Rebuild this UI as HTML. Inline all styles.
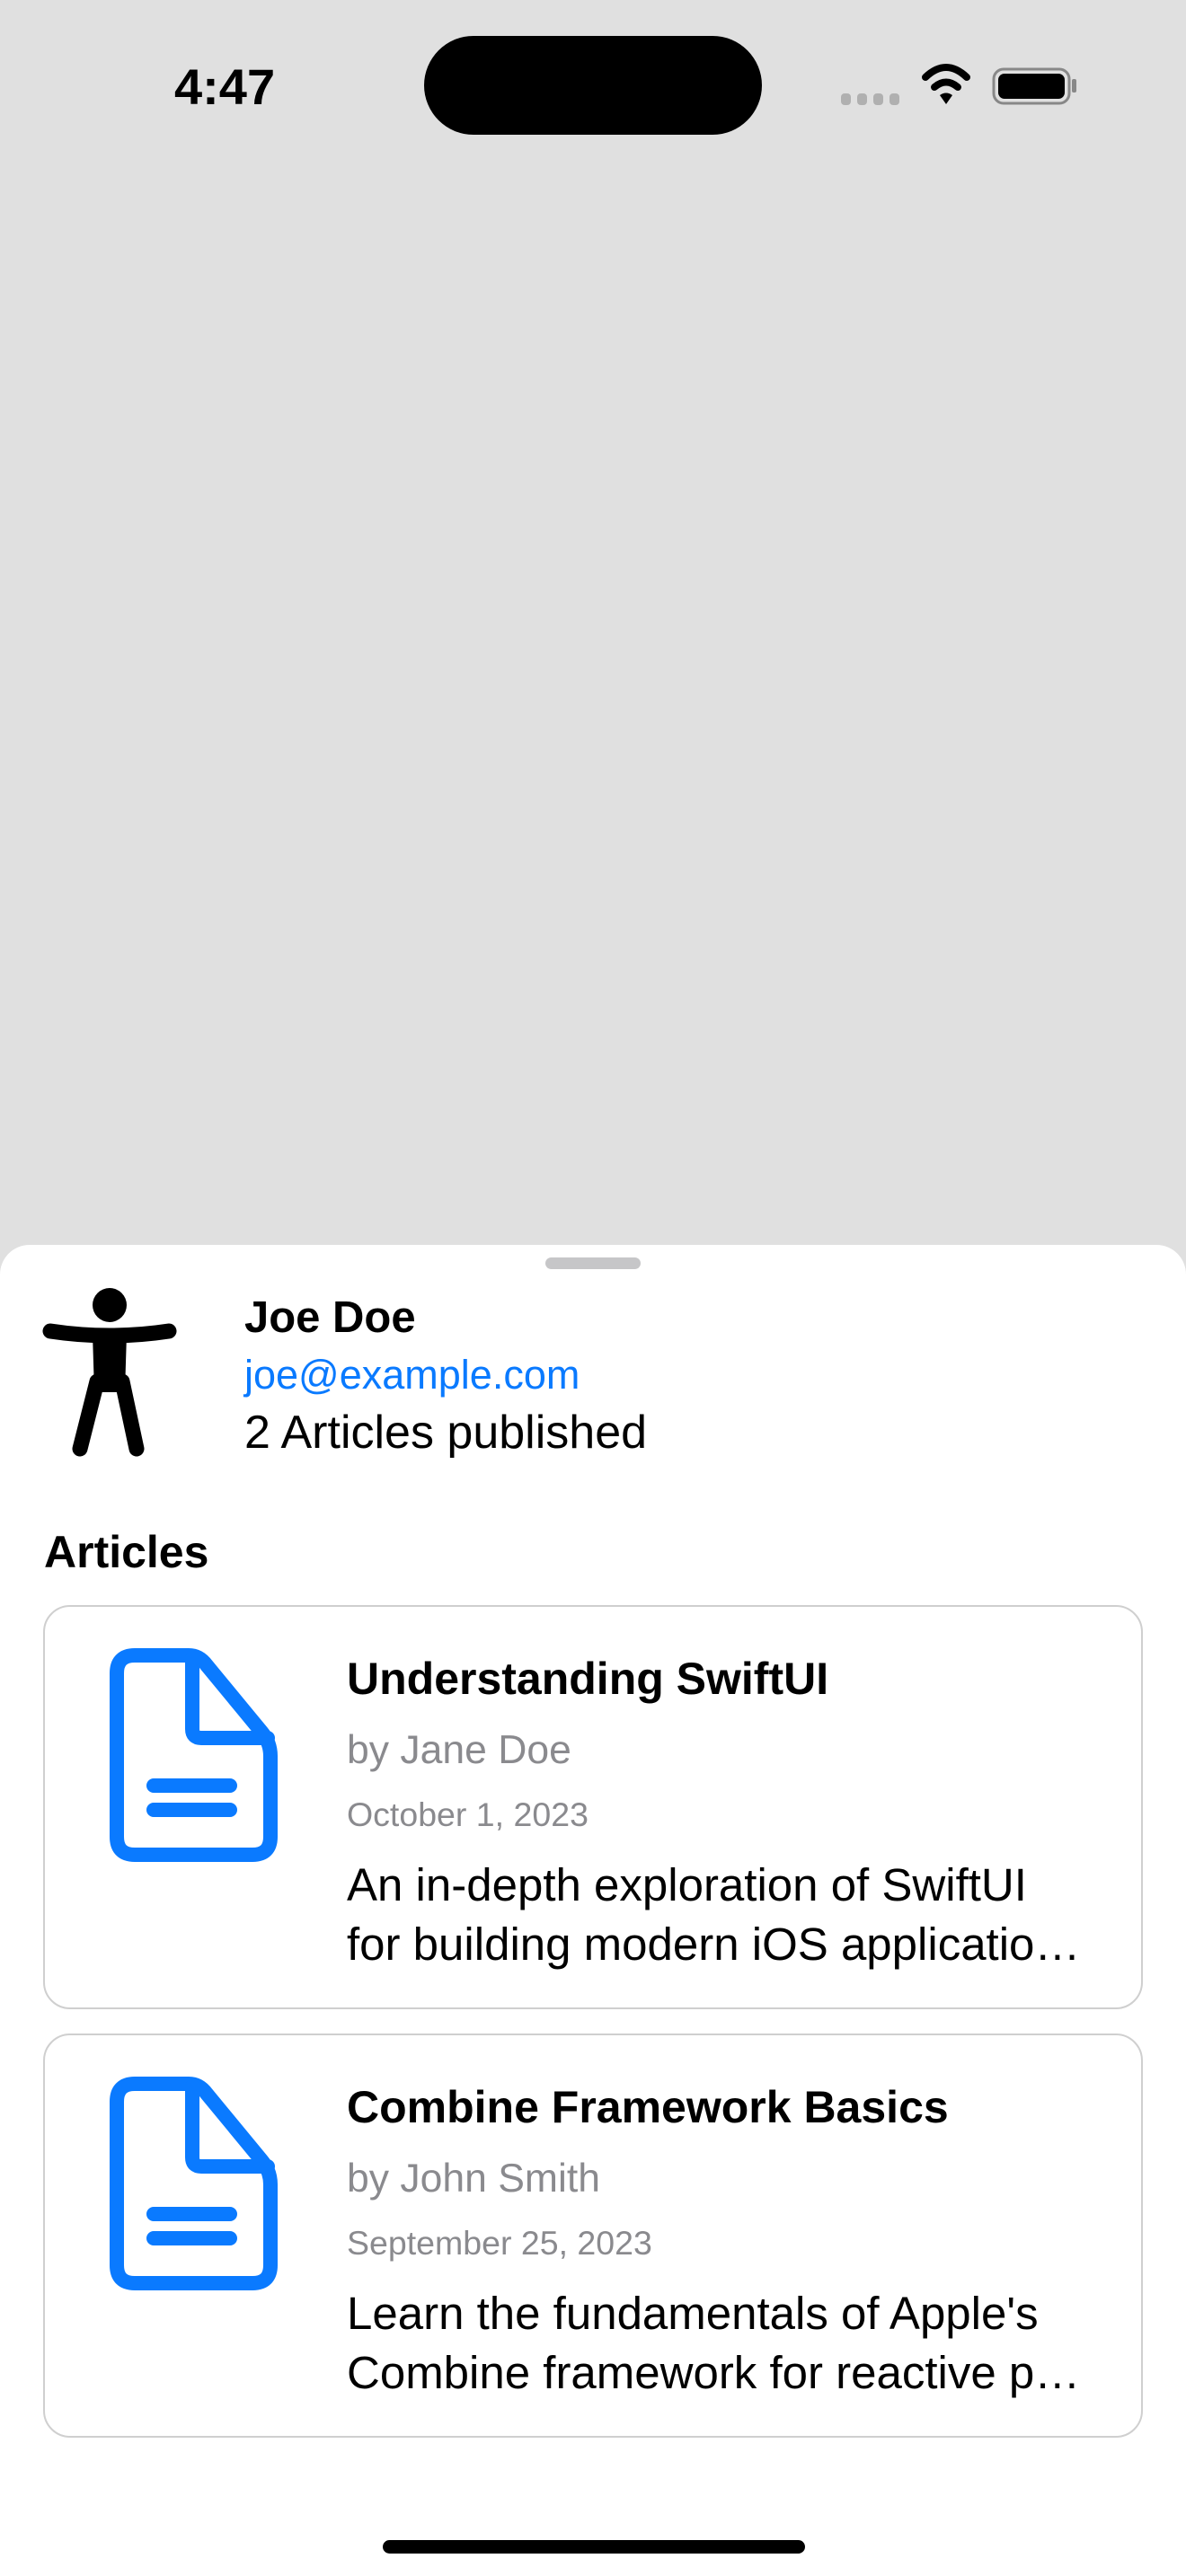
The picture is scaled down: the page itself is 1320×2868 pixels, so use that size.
<!DOCTYPE html>
<html><head><meta charset="utf-8"><style>
html,body{margin:0;padding:0}
body{width:1320px;height:2868px;background:#e0e0e0;position:relative;overflow:hidden;font-family:"Liberation Sans",sans-serif}
.t{position:absolute;white-space:nowrap;line-height:1}
.sheet{position:absolute;left:0;top:1386px;width:1320px;height:1482px;background:#fff;border-radius:33px 33px 0 0}
.card{position:absolute;left:48px;width:1224px;height:450px;border:2px solid #cfcfcf;border-radius:30px;box-sizing:border-box;background:#fff}
.ttl{font-size:50px;font-weight:bold;color:#000}
.au{font-size:44.5px;color:#8a8a8e}
.dt{font-size:37.5px;color:#8a8a8e}
.ds{font-size:51px;line-height:1.2;color:#000;width:830px;overflow:hidden;text-overflow:ellipsis}
</style></head><body>
<div class="t" style="left:194px;top:69px;font-size:56px;font-weight:bold">4:47</div>
<div style="position:absolute;left:472px;top:40px;width:376px;height:110px;background:#000;border-radius:55px"></div>
<svg style="position:absolute;left:0;top:0" width="1320" height="180">
<g fill="#b0b0b0"><rect x="936" y="104" width="11" height="13" rx="4"/><rect x="954" y="104" width="11" height="13" rx="4"/><rect x="972" y="104" width="11" height="13" rx="4"/><rect x="990" y="104" width="11" height="13" rx="4"/></g>
<g fill="none" stroke="#000" stroke-width="8" stroke-linecap="round">
<path d="M1030 86 Q1053 64 1076 86"/><path d="M1040 97 Q1053 86 1066 97"/></g>
<path d="M1046 106 L1053 116 L1060 106 Q1053 101 1046 106Z" fill="#000"/>
<rect x="1106" y="77" width="84" height="38" rx="11" fill="none" stroke="#888" stroke-width="3"/>
<rect x="1111" y="82" width="74" height="28" rx="7" fill="#000"/>
<rect x="1193" y="88" width="5" height="15" rx="2" fill="#888"/>
</svg>
<div class="sheet"></div>
<div style="position:absolute;left:607px;top:1400px;width:106px;height:13px;border-radius:7px;background:#c6c6c8"></div>
<svg style="position:absolute;left:0;top:1400px" width="240" height="240" viewBox="0 1400 240 240">
<circle cx="122" cy="1453" r="19" fill="#000"/>
<path d="M56 1482 Q122 1492 188 1482" stroke="#000" stroke-width="17" stroke-linecap="round" fill="none"/>
<path d="M103 1485 L141 1485 L139 1550 L105 1550Z" fill="#000"/>
<path d="M108 1538 L89 1613 M136 1538 L152 1613" stroke="#000" stroke-width="17" stroke-linecap="round" fill="none"/>
</svg>
<div class="t" style="left:272px;top:1443px;font-size:49px;font-weight:bold">Joe Doe</div>
<div class="t" style="left:272px;top:1508px;font-size:45px;color:#0a7aff">joe@example.com</div>
<div class="t" style="left:272px;top:1569px;font-size:52px">2 Articles published</div>
<div class="t" style="left:49px;top:1703px;font-size:50px;font-weight:bold">Articles</div>

<div class="card" style="top:1787px"></div>
<div class="card" style="top:2264px"></div>

<svg style="position:absolute;left:0;top:0" width="400" height="2868">
<g id="d" fill="none" stroke="#0a7aff" stroke-width="16" stroke-linejoin="round" stroke-linecap="round">
<path d="M150 1843 L210 1843 Q222 1843 230 1854 L291 1928 Q301 1940 301 1955 L301 2045 Q301 2065 281 2065 L150 2065 Q130 2065 130 2045 L130 1863 Q130 1843 150 1843Z"/>
<path d="M214 1846 L214 1925 Q214 1935 224 1935 L298 1935"/>
<path d="M171 1988 L256 1988 M171 2015 L256 2015"/>
</g>
<use href="#d" y="477"/>
</svg>

<div class="t ttl" style="left:386px;top:1844px">Understanding SwiftUI</div>
<div class="t au" style="left:386px;top:1927px">by Jane Doe</div>
<div class="t dt" style="left:386px;top:2002px">October 1, 2023</div>
<div class="t ds" style="left:386px;top:2068px">An in-depth exploration of SwiftUI</div>
<div class="t ds" style="left:386px;top:2134px">for building modern iOS applicatio…</div>

<div class="t ttl" style="left:386px;top:2321px">Combine Framework Basics</div>
<div class="t au" style="left:386px;top:2404px">by John Smith</div>
<div class="t dt" style="left:386px;top:2479px">September 25, 2023</div>
<div class="t ds" style="left:386px;top:2545px">Learn the fundamentals of Apple's</div>
<div class="t ds" style="left:386px;top:2611px">Combine framework for reactive programming</div>

<div style="position:absolute;left:426px;top:2828px;width:470px;height:15px;border-radius:8px;background:#000"></div>
</body></html>
